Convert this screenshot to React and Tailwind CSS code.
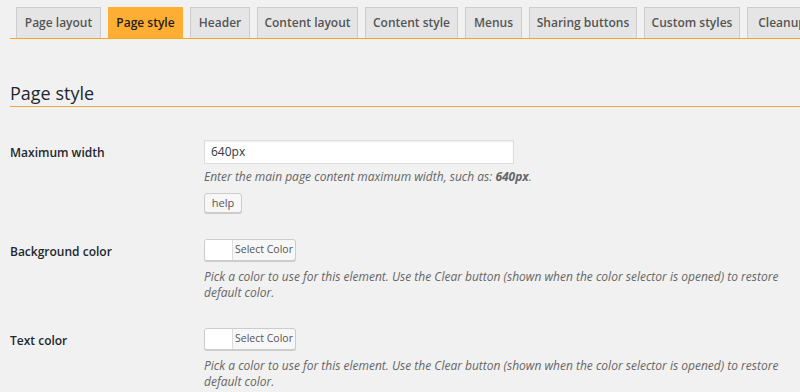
import React from 'react';

const tabs = [
  { label: 'Page layout', w: 'w-[85px]' },
  { label: 'Page style', w: 'w-[75px]', active: true },
  { label: 'Header', w: 'w-[60px]' },
  { label: 'Content layout', w: 'w-[101px]' },
  { label: 'Content style', w: 'w-[93px]' },
  { label: 'Menus', w: 'w-[57px]' },
  { label: 'Sharing buttons', w: 'w-[108px]' },
  { label: 'Custom styles', w: 'w-[96px]' },
  { label: 'Cleanup', w: 'w-[70px]' },
];

const colorHelp =
  'Pick a color to use for this element. Use the Clear button (shown when the color selector is opened) to restore default color.';

const ColorPicker = () => (
  <div className="flex h-[22px] w-[92px] border border-[#ccc] bg-[#f7f7f7] rounded-[3px] shadow-[0_1px_0_#ccc] overflow-hidden">
    <span className="w-[28px] bg-white border-r border-[#ddd]" />
    <span className="flex-1 flex items-center justify-center text-[10.5px] text-[#555]">Select Color</span>
  </div>
);

const Row = ({ label, children }) => (
  <div className="flex">
    <div className="w-[194px] shrink-0 pt-[3px] text-[12px] leading-[20px] font-semibold text-[#23282d]">
      {label}
    </div>
    <div className="flex-1">{children}</div>
  </div>
);

const App = () => {
  return (
    <div
      className="w-[800px] h-[392px] overflow-hidden bg-[#f1f1f1] pl-[10px]"
      style={{ fontFamily: '"Open Sans", "Noto Sans", sans-serif' }}
    >
      {/* Tabs */}
      <div className="pt-[7px] border-b border-[#f5a623] flex gap-[7px] pl-[6px] whitespace-nowrap">
        {tabs.map((t) => (
          <div
            key={t.label}
            className={
              t.active
                ? `${t.w} shrink-0 h-[31px] flex items-center justify-center text-[12px] font-semibold bg-[#ffae34] border border-[#ffae34] border-b-0 text-[#1d1d1d]`
                : `${t.w} shrink-0 h-[31px] flex items-center justify-center text-[12px] font-semibold bg-[#e5e5e5] border border-[#ccc] border-b-0 text-[#555]`
            }
          >
            {t.label}
          </div>
        ))}
      </div>

      {/* Heading */}
      <h2 className="mt-[42px] text-[18px] leading-[24px] text-[#23282d] border-b border-[#f0a742] pb-[1px]">
        Page style
      </h2>

      <div className="mt-[33px] pr-[10px]">
        <Row label="Maximum width">
          <div className="w-[310px] h-[24px] bg-white border border-[#ddd] shadow-[inset_0_1px_2px_rgba(0,0,0,0.07)] px-[6px] flex items-center text-[12px] text-[#32373c]">
            640px
          </div>
          <p className="mt-[5px] text-[12px] leading-[16px] italic text-[#666]">
            Enter the main page content maximum width, such as: <b className="font-bold">640px</b>.
          </p>
          <div className="mt-[8px] w-[38px] h-[20px] flex items-center justify-center bg-[#f7f7f7] border border-[#ccc] rounded-[3px] shadow-[0_1px_0_#ccc] text-[11px] text-[#555]">
            help
          </div>
        </Row>

        <div className="mt-[26px]">
          <Row label="Background color">
            <ColorPicker />
            <p className="mt-[8px] text-[12px] leading-[16px] italic text-[#666]">{colorHelp}</p>
          </Row>
        </div>

        <div className="mt-[27px]">
          <Row label="Text color">
            <ColorPicker />
            <p className="mt-[8px] text-[12px] leading-[16px] italic text-[#666]">{colorHelp}</p>
          </Row>
        </div>
      </div>
    </div>
  );
};

export default App;
